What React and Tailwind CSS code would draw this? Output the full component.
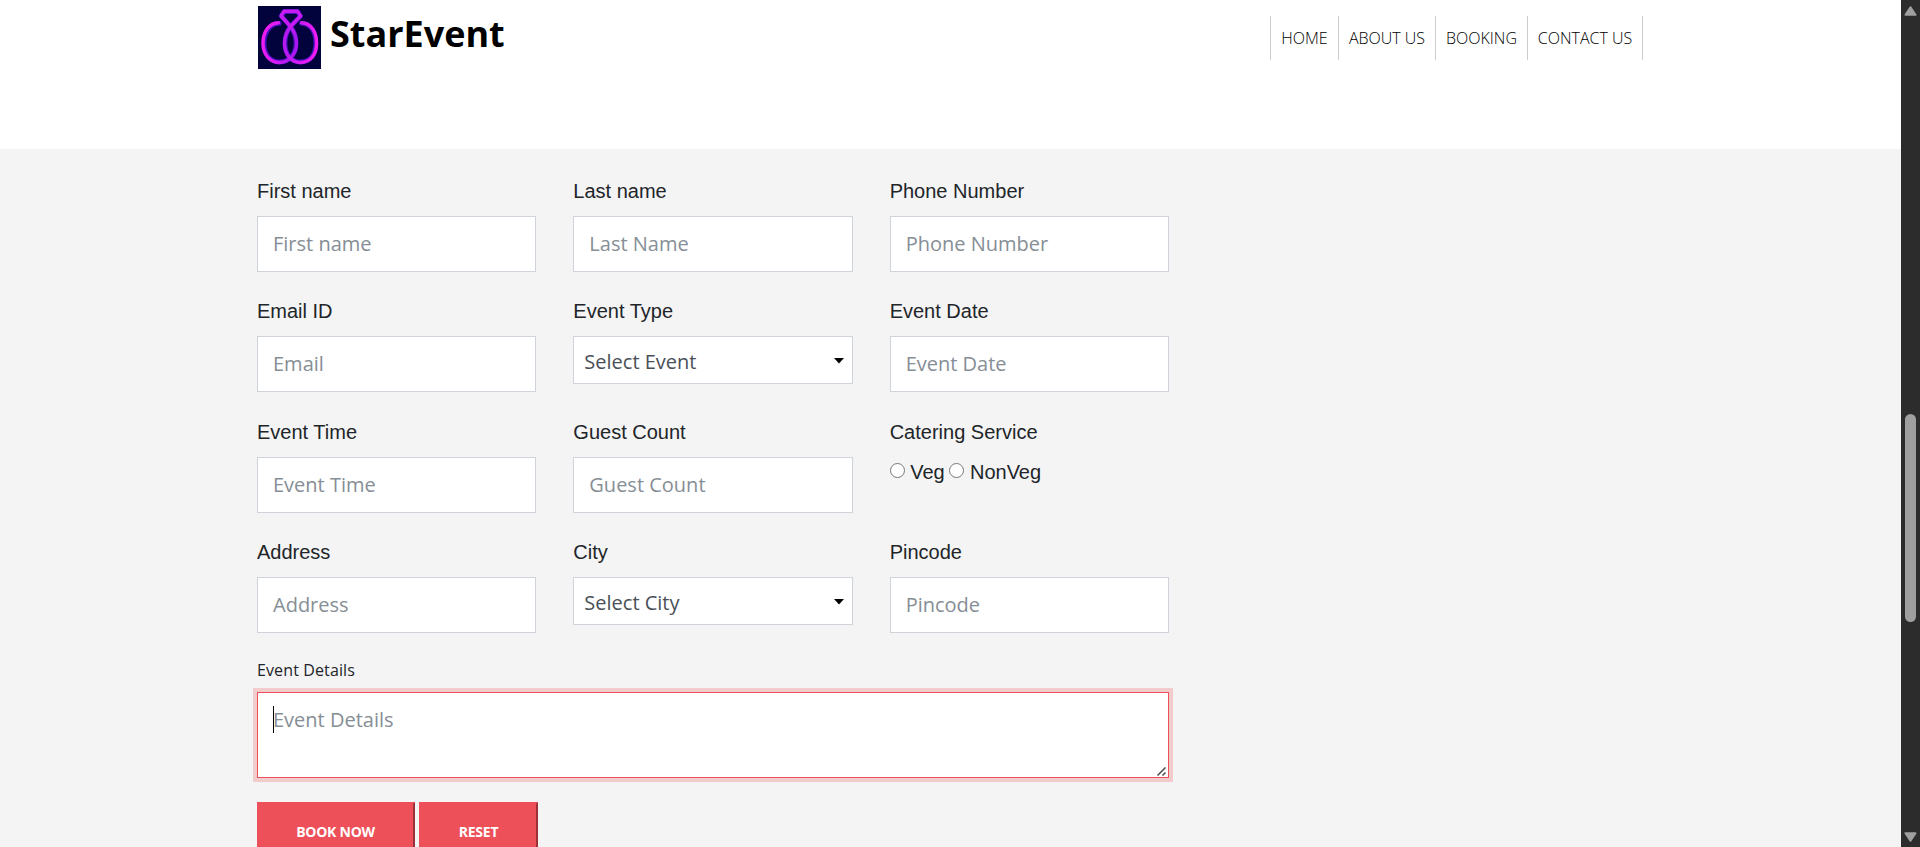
const NAV = [
  { label: "HOME", width: "w-[68px]" },
  { label: "ABOUT US", width: "w-[97px]" },
  { label: "BOOKING", width: "w-[92px]" },
  { label: "CONTACT US", width: "w-[115px]" },
];

const FIELDS = [
  { label: "First name", placeholder: "First name" },
  { label: "Last name", placeholder: "Last Name" },
  { label: "Phone Number", placeholder: "Phone Number" },
  { label: "Email ID", placeholder: "Email" },
  { label: "Event Type", option: "Select Event" },
  { label: "Event Date", placeholder: "Event Date" },
  { label: "Event Time", placeholder: "Event Time" },
  { label: "Guest Count", placeholder: "Guest Count" },
  { label: "Catering Service", radios: ["Veg", "NonVeg"] },
  { label: "Address", placeholder: "Address" },
  { label: "City", option: "Select City" },
  { label: "Pincode", placeholder: "Pincode" },
];

function Logo() {
  return (
    <svg className="h-[63px] w-[63px] shrink-0" viewBox="0 0 63 63" fill="none">
      <defs>
        <linearGradient id="neon" x1="0" y1="0" x2="1" y2="0.3">
          <stop offset="0" stopColor="#f01cf0" />
          <stop offset="0.6" stopColor="#d81bf3" />
          <stop offset="1" stopColor="#a818ee" />
        </linearGradient>
        <linearGradient id="neonRight" x1="0" y1="0" x2="1" y2="0.2">
          <stop offset="0" stopColor="#b018ee" />
          <stop offset="0.5" stopColor="#cc1df2" />
          <stop offset="1" stopColor="#f01cf0" />
        </linearGradient>
      </defs>
      <rect width="63" height="63" fill="#02023c" />
      <g strokeLinecap="round" strokeLinejoin="round">
        <g stroke="#5512d2" strokeWidth="4.800" opacity="0.85">
          <path d="M21.500 17.400C12 17.700 6 26 6 37.200C6 49 12.500 56 21.500 56C31 56 38 48 38 37.200C38 30.500 36 25 32.500 20.500L23.300 10L26.500 5.500H39.500L42.500 10L32.500 20.500C29 25 27 30.500 27 37.200C27 48 33 56 42.500 56C52 56 57.800 49 57.800 37.200C57.800 26 53 17.700 43.500 17.400" />
        </g>
        <path d="M20.500 16.700C11 17 5 26 5 37.200C5 49 12.500 56.500 21.500 56.500C31 56.500 38.500 48 38.500 37.200C38.500 30.500 36 25 32.500 20.500" stroke="url(#neon)" strokeWidth="3.400" />
        <path d="M43.500 16.700C53 17 58.600 26 58.600 37.200C58.600 49 52 56.500 42.500 56.500C33 56.500 26.500 48 26.500 37.200C26.500 30.500 29 25 32.500 20.500" stroke="url(#neonRight)" strokeWidth="3.400" />
        <path d="M32.500 20.500L23 10L26 5.200H39.500L42.600 10L32.500 20.500" stroke="#c81bf2" strokeWidth="3.400" />
      </g>
    </svg>
  );
}

function Field({ label, placeholder, option, radios }) {
  return (
    <div className="h-[120.4px]">
      <div className="mb-2.5 font-['Liberation_Sans',sans-serif] text-[20px] leading-[30px]">{label}</div>
      {placeholder && (
        <input
          className="block h-14 w-full border border-[#ced4da] bg-white px-[15px] pb-[1.500px] text-[20px] leading-[30px] placeholder:text-[#868e96] placeholder:opacity-100"
          placeholder={placeholder}
        />
      )}
      {option && (
        <div className="grid items-center">
          <select className="col-start-1 row-start-1 h-12 w-full appearance-none border border-[#ced4da] bg-white pt-[3px] pl-[10px] text-[20px] text-[#495057]">
            <option>{option}</option>
          </select>
          <svg className="pointer-events-none col-start-1 row-start-1 mt-px mr-[9px] h-[6px] w-[10px] justify-self-end" viewBox="0 0 10 6">
            <path d="M0 0H10L5 5.500Z" fill="#000" />
          </svg>
        </div>
      )}
      {radios && (
        <div className="flex h-[30px] font-['Liberation_Sans',sans-serif] text-[20px] leading-[30px]">
          {radios.map((name) => (
            <label key={name} className="mr-[4.800px] flex">
              <input type="radio" name="catering" className="mt-[6px] mr-[5.500px] h-[15px] w-[15px]" />
              {name}
            </label>
          ))}
        </div>
      )}
    </div>
  );
}

export default function App() {
  return (
    <div className="flex h-[847px] w-full overflow-hidden bg-white font-['Open_Sans',sans-serif] text-[#212529]">
      <div className="flex min-w-0 flex-1 flex-col">
        <header className="flex h-[149px] shrink-0 justify-between pt-[6px] pr-[258px] pl-[258px]">
          <div className="flex">
            <Logo />
            <span className="mt-px ml-[9px] text-[36px] leading-[54px] font-bold text-black">StarEvent</span>
          </div>
          <nav className="mt-2.5 flex h-11 border-l border-[#ccc]">
            {NAV.map(({ label, width }) => (
              <a key={label} className={`${width} border-r border-[#ccc] text-center text-[16px] leading-[44px] font-light whitespace-nowrap text-black`}>
                {label}
              </a>
            ))}
          </nav>
        </header>
        <main className="min-h-0 flex-1 overflow-hidden bg-[#f4f4f4] pt-[27px] pl-[257px]">
          <form className="w-[912px]">
            <div className="grid grid-cols-3 gap-x-[37px]">
              {FIELDS.map((field) => (
                <Field key={field.label} {...field} />
              ))}
            </div>
            <div className="mb-[10.400px] text-[16px] leading-6 tracking-[0.12px]">Event Details</div>
            <div className="relative h-[86px]">
              <textarea
                className="block h-[86px] w-full resize-none border border-[#ed5059] bg-white px-[15px] py-[12px] text-[20px] leading-[30px] shadow-[0_0_0_4px_rgba(237,80,89,0.25)] outline-none placeholder:text-[#868e96] placeholder:opacity-100"
                placeholder="Event Details"
              />
              <span className="absolute top-[14px] left-4 h-[27px] w-px bg-black" />
              <svg className="absolute right-[3px] bottom-[2px] h-[9px] w-[9px]" viewBox="0 0 9 9" fill="none" stroke="#4a4a4a" strokeWidth="1.500">
                <path d="M0.500 8.500L8.500 0.500M5.500 8.500L8.500 5.500" />
              </svg>
            </div>
            <div className="mt-6 flex gap-1 text-[14px] font-bold text-white">
              <button type="button" className="h-[60px] w-[158px] border-2 border-[#ed5059] bg-[#ed5059] pr-[1px] tracking-[-0.250px] [border-style:outset]">BOOK NOW</button>
              <button type="button" className="h-[60px] w-[119px] border-2 border-[#ed5059] bg-[#ed5059] tracking-[-0.250px] [border-style:outset]">RESET</button>
            </div>
          </form>
        </main>
      </div>
      <div className="flex w-[19px] shrink-0 flex-col items-center bg-[#2c2c2c] pt-[6px] pb-[5px]">
        <svg className="h-[10px] w-[13px]" viewBox="0 0 13 10">
          <path d="M6.500 1.200L11.500 8.800H1.500Z" fill="#9f9f9f" stroke="#9f9f9f" strokeWidth="2" strokeLinejoin="round" />
        </svg>
        <div className="mt-[398px] h-[208px] w-[11px] rounded-full bg-[#9f9f9f]" />
        <svg className="mt-auto h-[10px] w-[13px]" viewBox="0 0 13 10">
          <path d="M6.500 8.800L1.500 1.200H11.500Z" fill="#9f9f9f" stroke="#9f9f9f" strokeWidth="2" strokeLinejoin="round" />
        </svg>
      </div>
    </div>
  );
}
